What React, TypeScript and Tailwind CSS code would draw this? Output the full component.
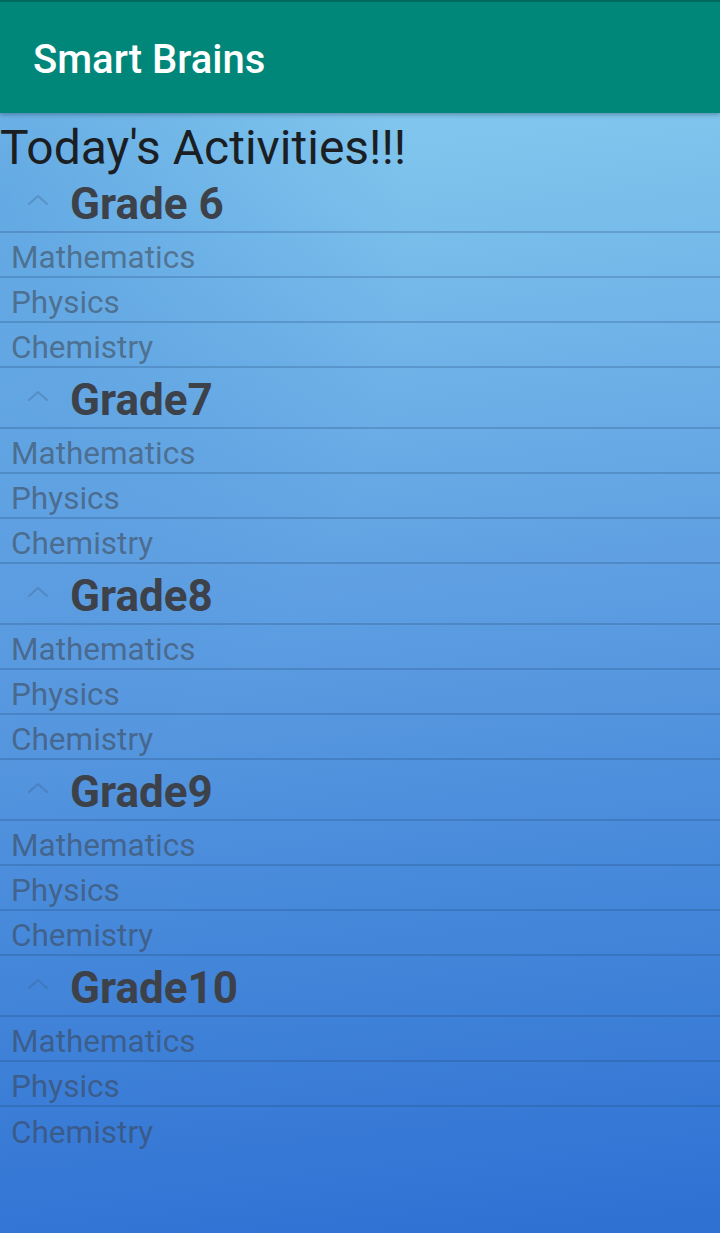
const grades = ['Grade 6', 'Grade7', 'Grade8', 'Grade9', 'Grade10']
const subjects = ['Mathematics', 'Physics', 'Chemistry']

const Chevron = () => (
  <svg className="w-[22px] h-[12px] text-[#3c5a80]/30" viewBox="0 0 22 12" fill="none" stroke="currentColor">
    <path d="M2 10 L11 2 L20 10" strokeWidth={2} strokeLinecap="round" strokeLinejoin="round" />
  </svg>
)

const GradeGroup = ({ name, last }: { name: string; last: boolean }) => (
  <div>
    <div className="h-[61px] flex items-center border-b-2 border-[#1e4678]/25">
      <div className="w-[70px] pl-[27px] flex items-center -mt-[4px]">
        <Chevron />
      </div>
      <span className="text-[44px] font-bold text-[#3d4149] leading-none pt-[5px]">{name}</span>
    </div>
    {subjects.map((s, i) => (
      <div
        key={s}
        className={
          last && i === subjects.length - 1
            ? 'h-[45px] flex items-center pl-[11px]'
            : 'h-[45px] flex items-center pl-[11px] border-b-2 border-[#1e4678]/25'
        }
      >
        <span className="text-[31.5px] text-[#3c4048]/55 leading-none pt-[6px]">{s}</span>
      </div>
    ))}
  </div>
)

export default function App() {
  return (
    <div className="w-[720px] h-[1233px] overflow-hidden flex flex-col font-['Roboto',sans-serif] bg-[linear-gradient(174deg,#88d0ef_0%,#7cc1ec_18%,#5f9fe2_48%,#4386d9_75%,#2e70d3_100%)]">
      <header className="h-[113px] shrink-0 flex items-center pl-[33px] bg-[#00877a] border-t-2 border-[#00695f] shadow-[0_2px_4px_rgba(0,0,0,0.25)] relative z-10">
        <h1 className="text-[40px] font-medium text-white leading-none pt-[4px]">Smart Brains</h1>
      </header>
      <main className="flex-1 bg-[radial-gradient(ellipse_at_0%_8%,rgba(50,120,210,0.35),transparent_40%)]">
        <div className="h-[59px] flex items-center">
          <h2 className="text-[48px] text-[#1b1e22] leading-none pt-[10px]">Today's Activities!!!</h2>
        </div>
        {grades.map((g, i) => (
          <GradeGroup key={g} name={g} last={i === grades.length - 1} />
        ))}
      </main>
    </div>
  )
}
